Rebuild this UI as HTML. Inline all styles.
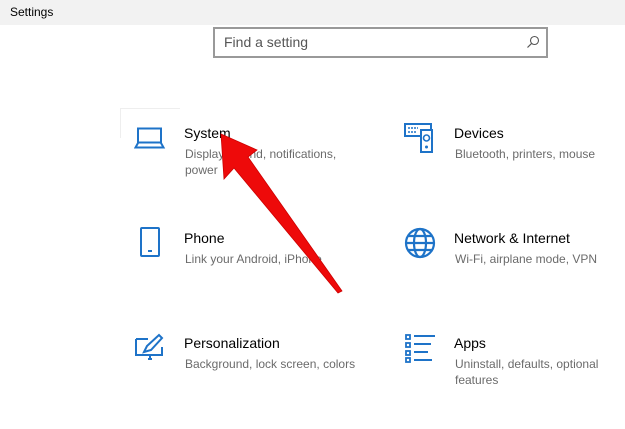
<!DOCTYPE html>
<html><head><meta charset="utf-8"><style>
body{margin:0;width:625px;height:429px;background:#fff;font-family:"Liberation Sans",sans-serif;position:relative;overflow:hidden}
.tb{position:absolute;left:0;top:0;width:625px;height:25px;background:#f2f2f2}
.tb span{position:absolute;left:10px;top:5px;font-size:12px;color:#000}
.search{position:absolute;left:213px;top:27px;width:331px;height:27px;border:2px solid #999;background:#fff}
.search span{position:absolute;left:9px;top:5px;font-size:14px;color:#555}
.t{position:absolute;font-size:14px;color:#000}
.d{position:absolute;font-size:12px;color:#6b6b6b;line-height:16px}
svg.i{position:absolute}
</style></head><body>
<div class="tb"><span>Settings</span></div>
<div class="search"><span>Find a setting</span>
<svg style="position:absolute;right:6px;top:6px" width="14" height="14" viewBox="0 0 14 14"><circle cx="8.5" cy="5.5" r="4" fill="none" stroke="#555" stroke-width="1.1"/><line x1="5.7" y1="8.3" x2="1.5" y2="12.5" stroke="#555" stroke-width="1.2"/></svg></div>
<div style="position:absolute;left:120px;top:108px;width:60px;height:1px;background:#eee"></div>
<div style="position:absolute;left:120px;top:108px;width:1px;height:30px;background:#eee"></div>

<svg class="i" style="left:134px;top:127px" width="32" height="24" viewBox="0 0 32 24"><rect x="4" y="1.5" width="23" height="14" fill="none" stroke="#1e73c8" stroke-width="2"/><path d="M4 16l-2.5 4.5h28L27 16" fill="none" stroke="#1e73c8" stroke-width="2"/></svg>
<div class="t" style="left:184px;top:125px">System</div>
<div class="d" style="left:185px;top:146px">Display, sound, notifications,<br>power</div>

<svg class="i" style="left:404px;top:122px" width="34" height="32" viewBox="0 0 34 32"><rect x="1" y="2" width="26" height="12" fill="none" stroke="#1e73c8" stroke-width="2"/><rect x="17" y="8" width="11" height="22" fill="#fff" stroke="#1e73c8" stroke-width="2"/><circle cx="22.5" cy="16" r="3" fill="none" stroke="#1e73c8" stroke-width="1.6"/><circle cx="22.5" cy="25" r="1.5" fill="#1e73c8"/><path d="M4 6h10M4 10h8" stroke="#1e73c8" stroke-width="1.5" stroke-dasharray="2 1"/></svg>
<div class="t" style="left:454px;top:125px">Devices</div>
<div class="d" style="left:455px;top:146px">Bluetooth, printers, mouse</div>

<svg class="i" style="left:138px;top:226px" width="24" height="32" viewBox="0 0 24 32"><rect x="3" y="2" width="18" height="28" rx="1" fill="none" stroke="#1e73c8" stroke-width="2"/><rect x="10" y="24" width="4" height="2" fill="#1e73c8"/></svg>
<div class="t" style="left:184px;top:230px">Phone</div>
<div class="d" style="left:185px;top:251px">Link your Android, iPhone</div>

<svg class="i" style="left:404px;top:227px" width="32" height="32" viewBox="0 0 32 32"><g fill="none" stroke="#1e73c8" stroke-width="2.2"><circle cx="16" cy="16" r="14"/><ellipse cx="16" cy="16" rx="6" ry="14"/><path d="M2 16h28M4.5 9h23M4.5 23h23"/></g></svg>
<div class="t" style="left:454px;top:230px">Network &amp; Internet</div>
<div class="d" style="left:455px;top:251px">Wi-Fi, airplane mode, VPN</div>

<svg class="i" style="left:134px;top:333px" width="32" height="30" viewBox="0 0 32 30"><path d="M2 6h12M2 6v16h26V14" fill="none" stroke="#1e73c8" stroke-width="2"/><path d="M14 26h4M16 22v4" stroke="#1e73c8" stroke-width="2"/><path d="M10 19l3-6 12-11 3 3-11 12z" fill="none" stroke="#1e73c8" stroke-width="2"/></svg>
<div class="t" style="left:184px;top:335px">Personalization</div>
<div class="d" style="left:185px;top:356px">Background, lock screen, colors</div>

<svg class="i" style="left:404px;top:333px" width="32" height="30" viewBox="0 0 32 30"><g fill="none" stroke="#1e73c8" stroke-width="1.8"><rect x="2" y="2" width="4" height="4"/><rect x="2" y="10" width="4" height="4"/><rect x="2" y="18" width="4" height="4"/><rect x="2" y="25" width="4" height="4"/></g><path d="M10 3h21M10 11h17M10 19h14M10 27h18" stroke="#1e73c8" stroke-width="2"/></svg>
<div class="t" style="left:454px;top:335px">Apps</div>
<div class="d" style="left:455px;top:356px">Uninstall, defaults, optional<br>features</div>

<svg style="position:absolute;left:0;top:0" width="625" height="429"><polygon points="221,134 257,150 248,157 342,291 338,293 234,168 224,179" fill="#ee0a0a" stroke="#c00" stroke-width="0.8"/></svg>
</body></html>
